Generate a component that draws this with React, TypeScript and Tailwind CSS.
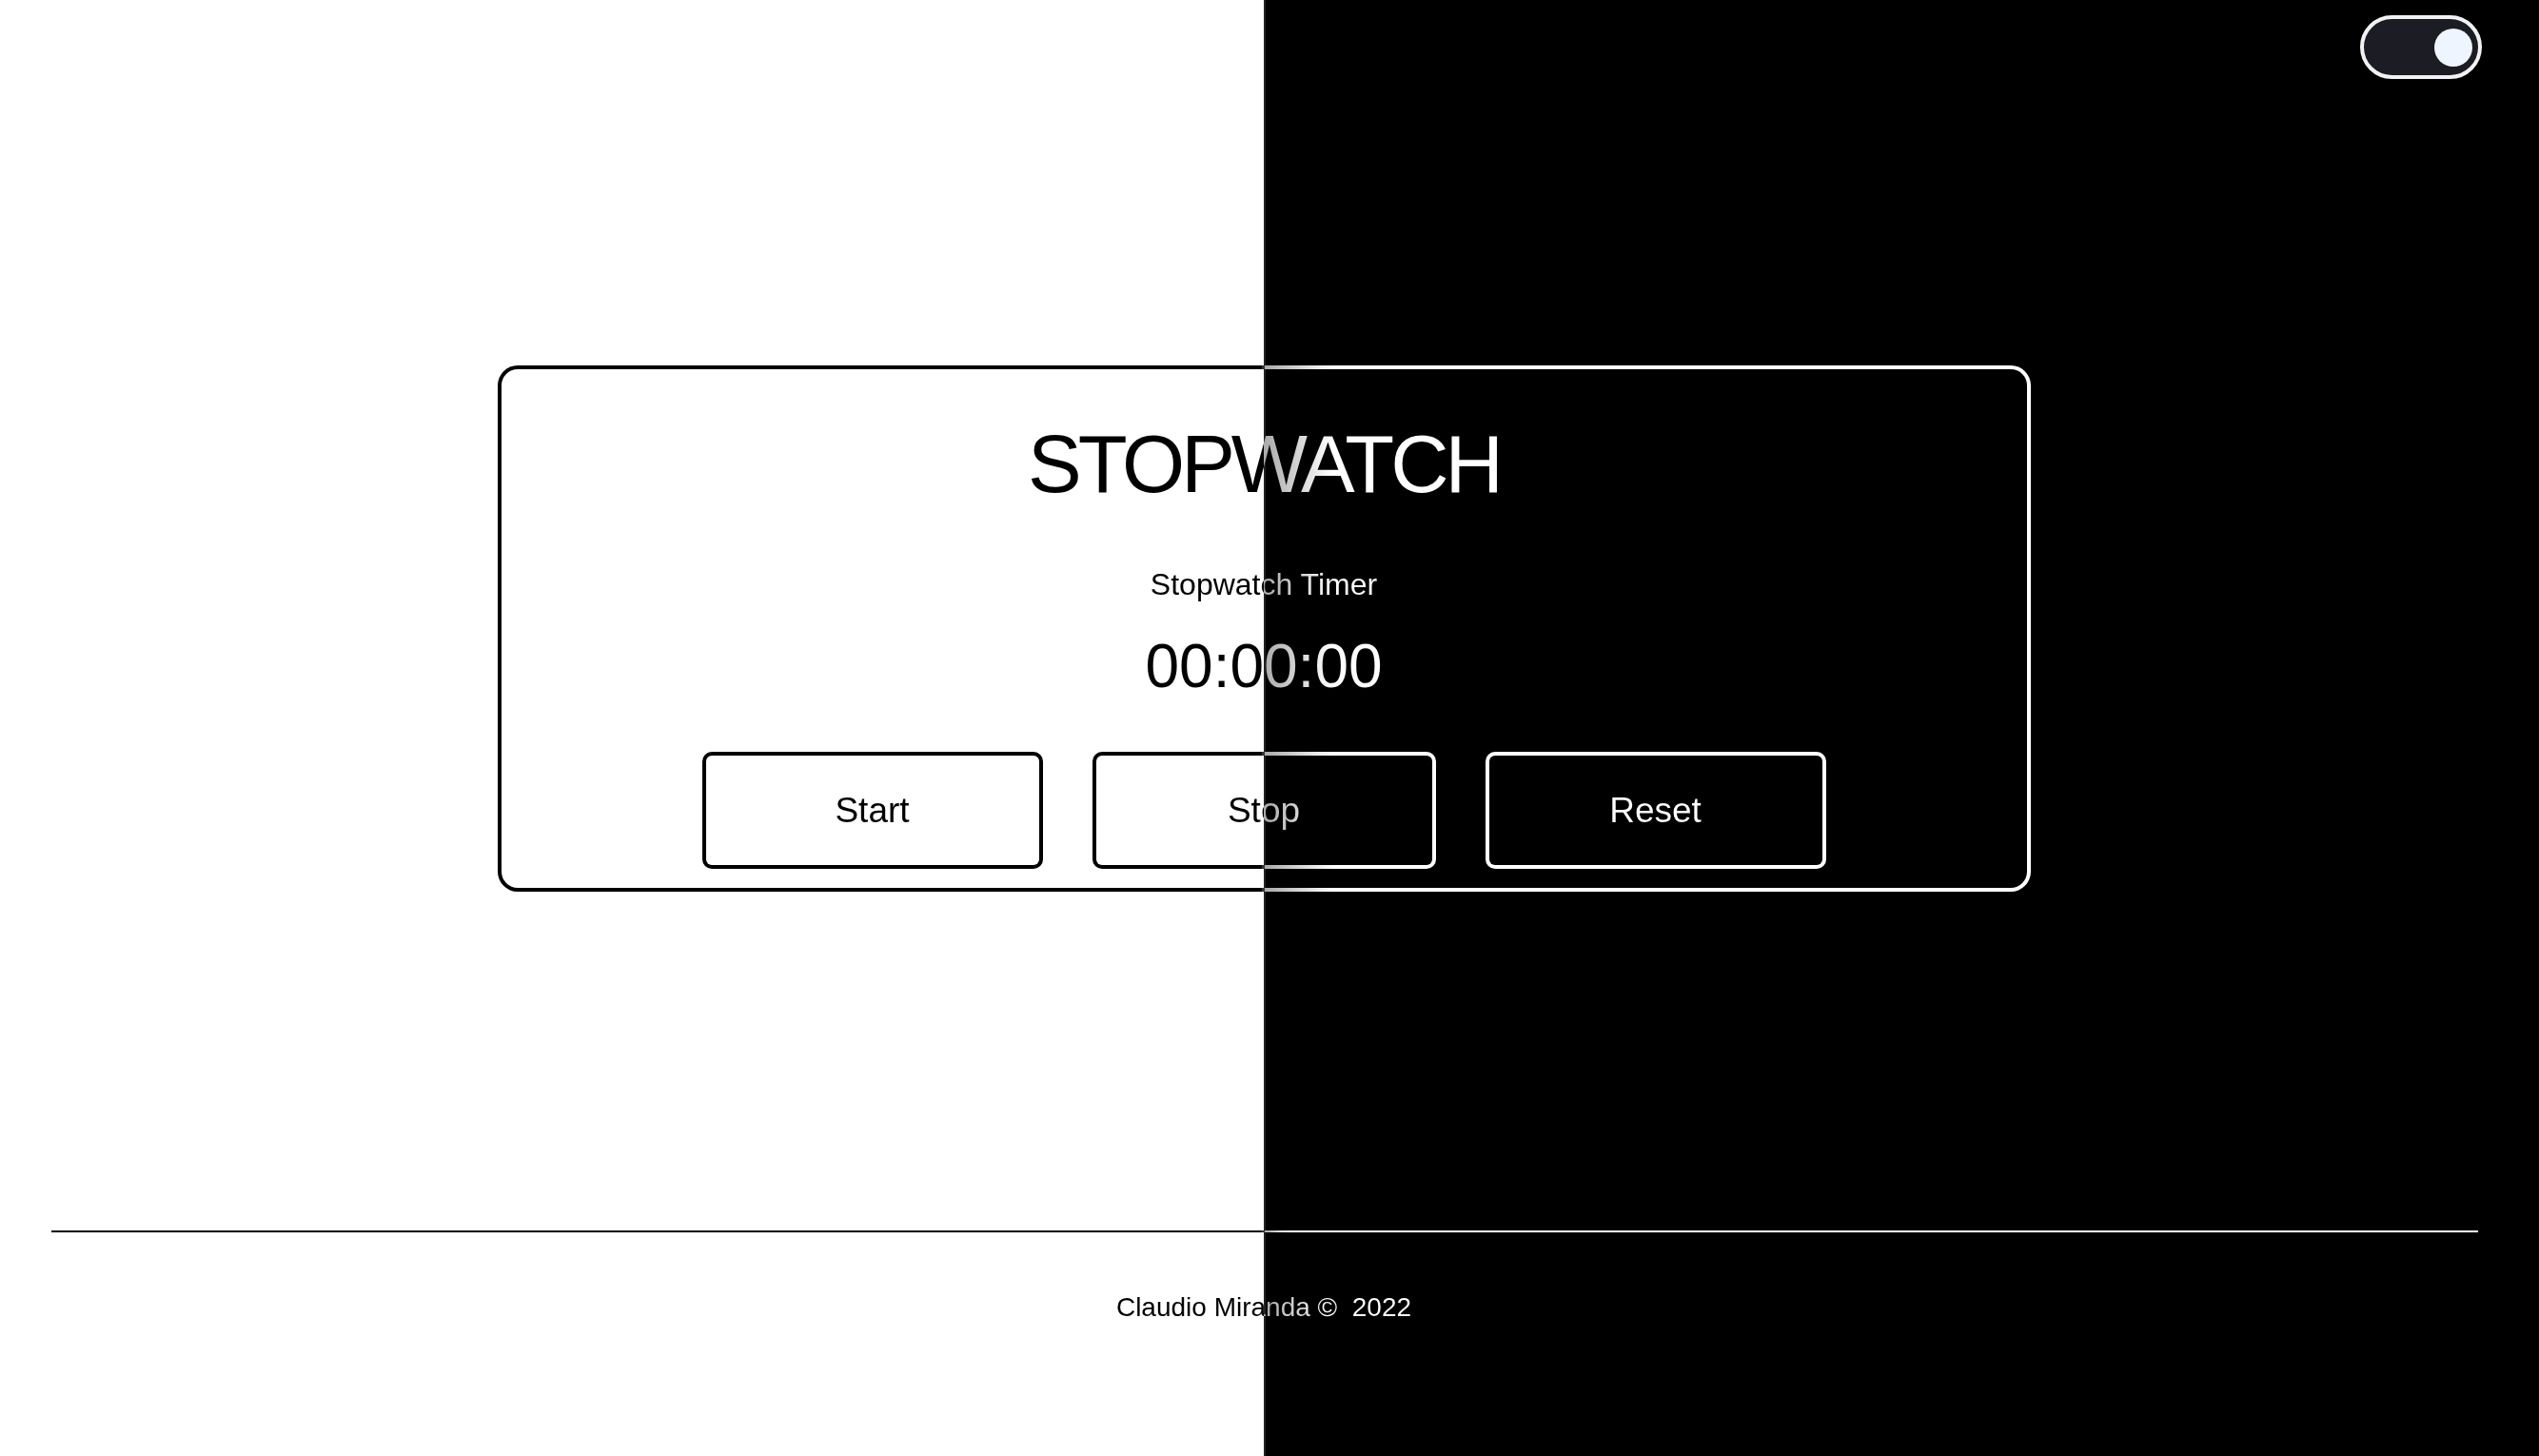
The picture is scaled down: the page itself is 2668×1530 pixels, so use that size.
import React from 'react';

// shared split: page is white on the left half, black on the right
const ink =
  'text-transparent bg-clip-text bg-fixed bg-[linear-gradient(90deg,#000_1328px,#aaa_1328px,#fff_1400px)]';
const framed =
  'border-4 border-transparent [background:linear-gradient(90deg,#fff_1328px,#222_1328px,#222_1330px,#000_1330px)_fixed_padding-box,linear-gradient(90deg,#000_1326px,#333_1326px,#333_1329px,#aaa_1329px,#fff_1400px)_fixed_border-box]';

const Toggle = () => (
  <button
    aria-label="toggle theme"
    className="w-[128px] h-[67px] rounded-full border-4 border-[#f2f2f2] bg-[#1b1c24] flex items-center justify-end pr-[6px]"
  >
    <span className="block w-[40px] h-[40px] rounded-full bg-[#eef5ff]" />
  </button>
);

const Btn = ({ label, width }: { label: string; width: string }) => (
  <button className={`${framed} ${width} h-[123px] rounded-[10px] flex items-center justify-center`}>
    <span className={`${ink} text-[37px] leading-[42px]`}>{label}</span>
  </button>
);

const App = () => {
  return (
    <div className="min-h-screen w-full bg-fixed bg-[linear-gradient(90deg,#fff_1328px,#222_1328px,#222_1330px,#000_1330px)] font-['Liberation_Sans',Arial,sans-serif]">
      <div className="w-[2656px] flex flex-col">
        <header className="flex justify-end pt-[16px] pr-[48px]">
          <Toggle />
        </header>

        <main className="flex justify-center mt-[301px]">
          <section className={`${framed} w-[1611px] rounded-[21px] flex flex-col items-center pt-[51px] pb-[20px]`}>
            <h1 className={`${ink} text-[85px] leading-[98px] tracking-[-4px]`}>STOPWATCH</h1>
            <p className={`${ink} mt-[59px] text-[32px] leading-[37px]`}>Stopwatch Timer</p>
            <div className={`${ink} mt-[30px] text-[64px] leading-[74px]`}>00:00:00</div>
            <div className="mt-[53px] flex gap-[52px]">
              <Btn label="Start" width="w-[358px]" />
              <Btn label="Stop" width="w-[361px]" />
              <Btn label="Reset" width="w-[358px]" />
            </div>
          </section>
        </main>

        <div className="mt-[356px] ml-[54px] mr-[52px] h-[2px] bg-fixed bg-[linear-gradient(90deg,#000_1326px,#333_1326px,#333_1329px,#aaa_1329px,#fff_1355px)]" />

        <footer className="mt-[63px] flex justify-center">
          <p className={`${ink} text-[28px] leading-[32px] whitespace-pre`}>Claudio Miranda ©  2022</p>
        </footer>
      </div>
    </div>
  );
};

export default App;
